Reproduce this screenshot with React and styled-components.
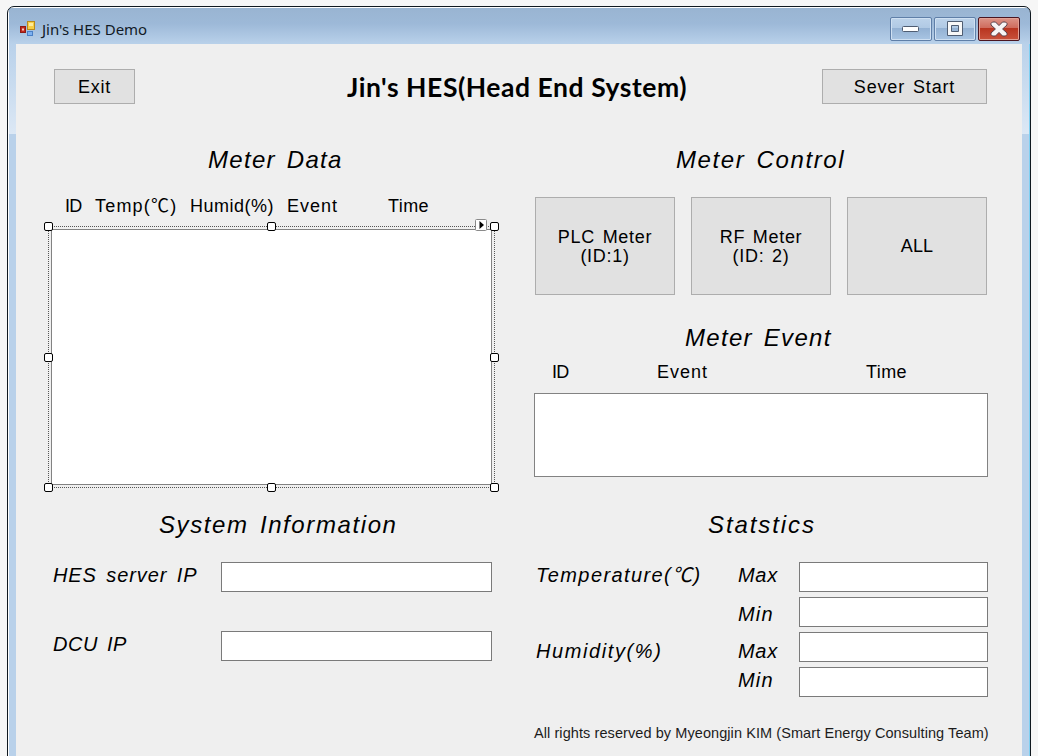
import React from "react";
import styled, { createGlobalStyle } from "styled-components";

const Global = createGlobalStyle`
  * { box-sizing: border-box; }
  body { margin: 0; background: #f6f6f6; color: #000; font-family: "Liberation Sans", "Noto Sans CJK KR", sans-serif; }
`;

const Desktop = styled.div`
  height: 756px;
  padding: 6px 7px 0;
  overflow: hidden;
`;

const Window = styled.div`
  width: 1024px;
  height: 770px;
  border: 1px solid #10181f;
  border-radius: 7px 7px 0 0;
  padding: 0 8px;
  background:
    linear-gradient(#fff, #fff) 0 0 / 100% 1px no-repeat,
    linear-gradient(#fff, #fff) 0 0 / 1px 100% no-repeat,
    linear-gradient(#7fd0f2, #7fd0f2) 100% 37px / 1px 100% no-repeat,
    linear-gradient(#b9d1ea, #dce8f5) 0 37px / 100% 90px no-repeat,
    linear-gradient(#99b4d1, #9db9d8 45%, #b9d1ea) 0 0 / 100% 37px no-repeat,
    #b9d1ea;
`;

const TitleBar = styled.header`
  display: flex;
  align-items: flex-start;
  height: 37px;
  padding: 10px 2px 0 3px;
`;

const AppIcon = styled.svg`
  width: 17px;
  height: 17px;
  margin-top: 3px;
`;

const Caption = styled.span`
  flex: 1;
  margin: 2px 0 0 6px;
  font: 15px/20px "Noto Sans", sans-serif;
  letter-spacing: 0;
  color: #111a26;
`;

const CaptionButtons = styled.div`
  display: flex;
  gap: 2px;
`;

const CaptionButton = styled.button`
  display: grid;
  place-items: center;
  width: 42px;
  height: 24px;
  padding: 0;
  border: 1px solid ${(p) => (p.$close ? "#4a1520" : "#5f7fa8")};
  border-radius: 2px;
  box-shadow: inset 0 0 0 1px ${(p) => (p.$close ? "#e2a195" : "#cfe0f2")};
  background: ${(p) =>
    p.$close
      ? "linear-gradient(#dc9488, #cf6b5c 45%, #b8341f 46%, #c9513b)"
      : "linear-gradient(#bdd3ea, #b0c9e4 45%, #93b1d3 46%, #a9c5e3)"};
`;

const Client = styled.main`
  height: 725px;
  padding: 25px 34px 0 30px;
  background: #efefef;
`;

const Header = styled.div`
  display: flex;
  height: 76px;
  padding: 0 1px 0 8px;
`;

const PushButton = styled.button`
  width: ${(p) => p.$w}px;
  height: ${(p) => p.$h}px;
  padding: ${(p) => p.$pt ?? 2}px 0 0;
  border: 1px solid #adadad;
  background: #e1e1e1;
  color: #000;
  font: 18px/19px "Liberation Sans", sans-serif;
  letter-spacing: ${(p) => p.$ls ?? 0.7}px;
  word-spacing: ${(p) => p.$ws ?? 2}px;
  white-space: pre-line;
`;

const Title = styled.h1`
  flex: 1;
  margin: 2px 0 0 212px;
  font: bold 26.5px/32px Lato, sans-serif;
  letter-spacing: ${(p) => p.$ls}px;
  white-space: nowrap;
`;

const Columns = styled.div`
  display: grid;
  grid-template-columns: 488px 454px;
`;

const Column = styled.section`
  display: flex;
  flex-direction: column;
`;

const Heading = styled.h2`
  margin: ${(p) => p.$mt ?? 0}px 0 0;
  padding-left: ${(p) => p.$x}px;
  font: italic 24px/30px "Liberation Sans", sans-serif;
  letter-spacing: ${(p) => p.$ls ?? 1.3}px;
  word-spacing: ${(p) => p.$ws ?? 3}px;
  white-space: nowrap;
`;

const ColumnLabels = styled.div`
  display: grid;
  grid-template-columns: ${(p) => p.$cols};
  margin-top: ${(p) => p.$mt}px;
  padding-left: ${(p) => p.$x}px;
  font-size: 18px;
  line-height: 20px;
  height: 20px;
  white-space: nowrap;
`;

const ColumnLabel = styled.span`
  letter-spacing: ${(p) => p.$ls ?? 0.4}px;
`;

const Selection = styled.div`
  position: relative;
  width: 447px;
  height: 262px;
  margin: 10px 0 0 2px;
  border: 1px dotted #555;
  padding: 2px;
`;

const ListBox = styled.div`
  height: ${(p) => p.$h}px;
  margin-top: ${(p) => p.$mt ?? 0}px;
  border: 1px solid #828282;
  background: #fff;
`;

const Handle = styled.i`
  position: absolute;
  left: ${(p) => p.$x};
  top: ${(p) => p.$y};
  width: 9px;
  height: 9px;
  margin: -5px 0 0 -5px;
  border: 1px solid #000;
  border-radius: 2px;
  background: #fff;
`;

const SmartTag = styled.svg`
  position: absolute;
  right: 7px;
  top: -8px;
  width: 12px;
  height: 12px;
`;

const ButtonRow = styled.div`
  display: flex;
  gap: 16px;
  margin: 22px 0 0 1px;
`;

const Field = styled.div`
  display: grid;
  grid-template-columns: ${(p) => p.$cols};
  height: 30px;
  margin-top: ${(p) => p.$mt}px;
`;

const FieldLabel = styled.label`
  margin-top: ${(p) => p.$dy}px;
  font: italic 20px/24px "Liberation Sans", "Noto Sans CJK KR", sans-serif;
  height: 24px;
  letter-spacing: ${(p) => p.$ls ?? 0.7}px;
  word-spacing: ${(p) => p.$ws ?? 3}px;
  padding-left: ${(p) => p.$x ?? 0}px;
  white-space: nowrap;
`;

const TextBox = styled.input`
  width: 100%;
  height: 30px;
  padding: 0 4px;
  border: 1px solid #7a7a7a;
  border-radius: 0;
  background: #fff;
  font-size: 18px;
`;

const Footer = styled.footer`
  margin-top: 27px;
  padding-right: 2px;
  font-size: 14.5px;
  line-height: 18px;
  letter-spacing: ${(p) => p.$ls}px;
  text-align: right;
  white-space: nowrap;
  color: #1c1c1c;
`;

const handles = [
  ["0px", "0px"], ["calc(50% + 0.5px)", "0px"], ["calc(100% + 1px)", "0px"],
  ["0px", "calc(50% + 1px)"], ["calc(100% + 1px)", "calc(50% + 1px)"],
  ["0px", "calc(100% + 1px)"], ["calc(50% + 0.5px)", "calc(100% + 1px)"], ["calc(100% + 1px)", "calc(100% + 1px)"],
];

export default function App() {
  return (
    <Desktop>
      <Global />
      <Window>
        <TitleBar>
          <AppIcon viewBox="0 0 17 17">
            <rect x="1.5" y="6.5" width="5" height="6" fill="#c0281c" stroke="#8e1a14" />
            <rect x="3" y="8.5" width="2" height="2" fill="#f6c9bd" />
            <rect x="8.5" y="11.5" width="5" height="4" fill="#7db1f0" stroke="#4a80c6" />
            <rect x="8.5" y="1.5" width="7" height="8" fill="#f7cf45" stroke="#b98a1c" />
            <path d="M10 3h4v3h-4z" fill="#fdeb9c" />
          </AppIcon>
          <Caption>Jin's HES Demo</Caption>
          <CaptionButtons>
            <CaptionButton aria-label="Minimize">
              <svg width="18" height="8" viewBox="0 0 18 8">
                <rect x="0.5" y="1.5" width="16" height="5" rx="1" fill="#fff" stroke="#4f5d72" />
              </svg>
            </CaptionButton>
            <CaptionButton aria-label="Maximize">
              <svg width="18" height="16" viewBox="0 0 18 16">
                <path d="M1.5 0.5h15v14h-15z M5.5 4.5v6h7v-6z" fill="#f8f8f8" fillRule="evenodd" stroke="#4f5d72" strokeLinejoin="round" />
              </svg>
            </CaptionButton>
            <CaptionButton $close aria-label="Close">
              <svg width="20" height="16" viewBox="0 0 20 16">
                <path
                  d="M2 2.5L3.5 1H6.5L10 4.6L13.5 1H16.5L18 2.5V4L13.6 8L18 12V13.5L16.5 15H13.5L10 11.4L6.5 15H3.5L2 13.5V12L6.4 8L2 4Z"
                  fill="#f7f5f5"
                  stroke="#58424c"
                  strokeLinejoin="round"
                />
              </svg>
            </CaptionButton>
          </CaptionButtons>
        </TitleBar>
        <Client>
          <Header>
            <PushButton $w={81} $h={35}>Exit</PushButton>
            <Title $ls={0.55}>Jin's HES(Head End System)</Title>
            <PushButton $w={165} $h={35} $ls={0.85}>Sever Start</PushButton>
          </Header>
          <Columns>
            <Column>
              <Heading $x={162}>Meter Data</Heading>
              <ColumnLabels $mt={21} $x={19} $cols="30px 95px 97px 101px auto">
                <ColumnLabel $ls={-0.8}>ID</ColumnLabel>
                <ColumnLabel $ls={1.2}>Temp(℃)</ColumnLabel>
                <ColumnLabel $ls={0.5}>Humid(%)</ColumnLabel>
                <ColumnLabel $ls={1}>Event</ColumnLabel>
                <ColumnLabel>Time</ColumnLabel>
              </ColumnLabels>
              <Selection>
                <ListBox $h={256} />
                {handles.map(([x, y]) => (
                  <Handle key={x + y} $x={x} $y={y} />
                ))}
                <SmartTag viewBox="0 0 12 12">
                  <rect x="0.5" y="0.5" width="11" height="11" rx="1" fill="#fff" stroke="#8a8a8a" />
                  <path d="M4.5 2v8l4.5-4z" fill="#000" />
                </SmartTag>
              </Selection>
              <Heading $mt={22} $x={113} $ls={1.6}>System Information</Heading>
              <Field $mt={22} $cols="175px 271px">
                <FieldLabel $dy={1} $x={7} $ls={0.9}>HES server IP</FieldLabel>
                <TextBox />
              </Field>
              <Field $mt={39} $cols="175px 271px">
                <FieldLabel $dy={1} $x={7} $ls={0.5}>DCU IP</FieldLabel>
                <TextBox />
              </Field>
            </Column>
            <Column>
              <Heading $x={142} $ls={1.6}>Meter Control</Heading>
              <ButtonRow>
                <PushButton $w={140} $h={98}>{"PLC Meter\n(ID:1)"}</PushButton>
                <PushButton $w={140} $h={98}>{"RF Meter\n(ID: 2)"}</PushButton>
                <PushButton $w={140} $h={98} $ls={0.2} $pt={0}>ALL</PushButton>
              </ButtonRow>
              <Heading $mt={28} $x={151}>Meter Event</Heading>
              <ColumnLabels $mt={9} $x={18} $cols="105px 209px auto">
                <ColumnLabel $ls={-0.8}>ID</ColumnLabel>
                <ColumnLabel $ls={1}>Event</ColumnLabel>
                <ColumnLabel>Time</ColumnLabel>
              </ColumnLabels>
              <ListBox $mt={11} $h={84} />
              <Heading $mt={33} $x={174} $ls={1.9}>Statstics</Heading>
              <Field $mt={22} $cols="203px 62px 189px">
                <FieldLabel $dy={1} $x={2} $ls={1.4}>Temperature(℃)</FieldLabel>
                <FieldLabel $dy={1} $x={1}>Max</FieldLabel>
                <TextBox />
              </Field>
              <Field $mt={5} $cols="203px 62px 189px">
                <span />
                <FieldLabel $dy={5} $x={1} $ls={1.2}>Min</FieldLabel>
                <TextBox />
              </Field>
              <Field $mt={5} $cols="203px 62px 189px">
                <FieldLabel $dy={7} $x={2} $ls={1.6}>Humidity(%)</FieldLabel>
                <FieldLabel $dy={7} $x={1}>Max</FieldLabel>
                <TextBox />
              </Field>
              <Field $mt={5} $cols="203px 62px 189px">
                <span />
                <FieldLabel $dy={1} $x={1} $ls={1.2}>Min</FieldLabel>
                <TextBox />
              </Field>
              <Footer $ls={0.08}>
                All rights reserved by Myeongjin KIM (Smart Energy Consulting Team)
              </Footer>
            </Column>
          </Columns>
        </Client>
      </Window>
    </Desktop>
  );
}
